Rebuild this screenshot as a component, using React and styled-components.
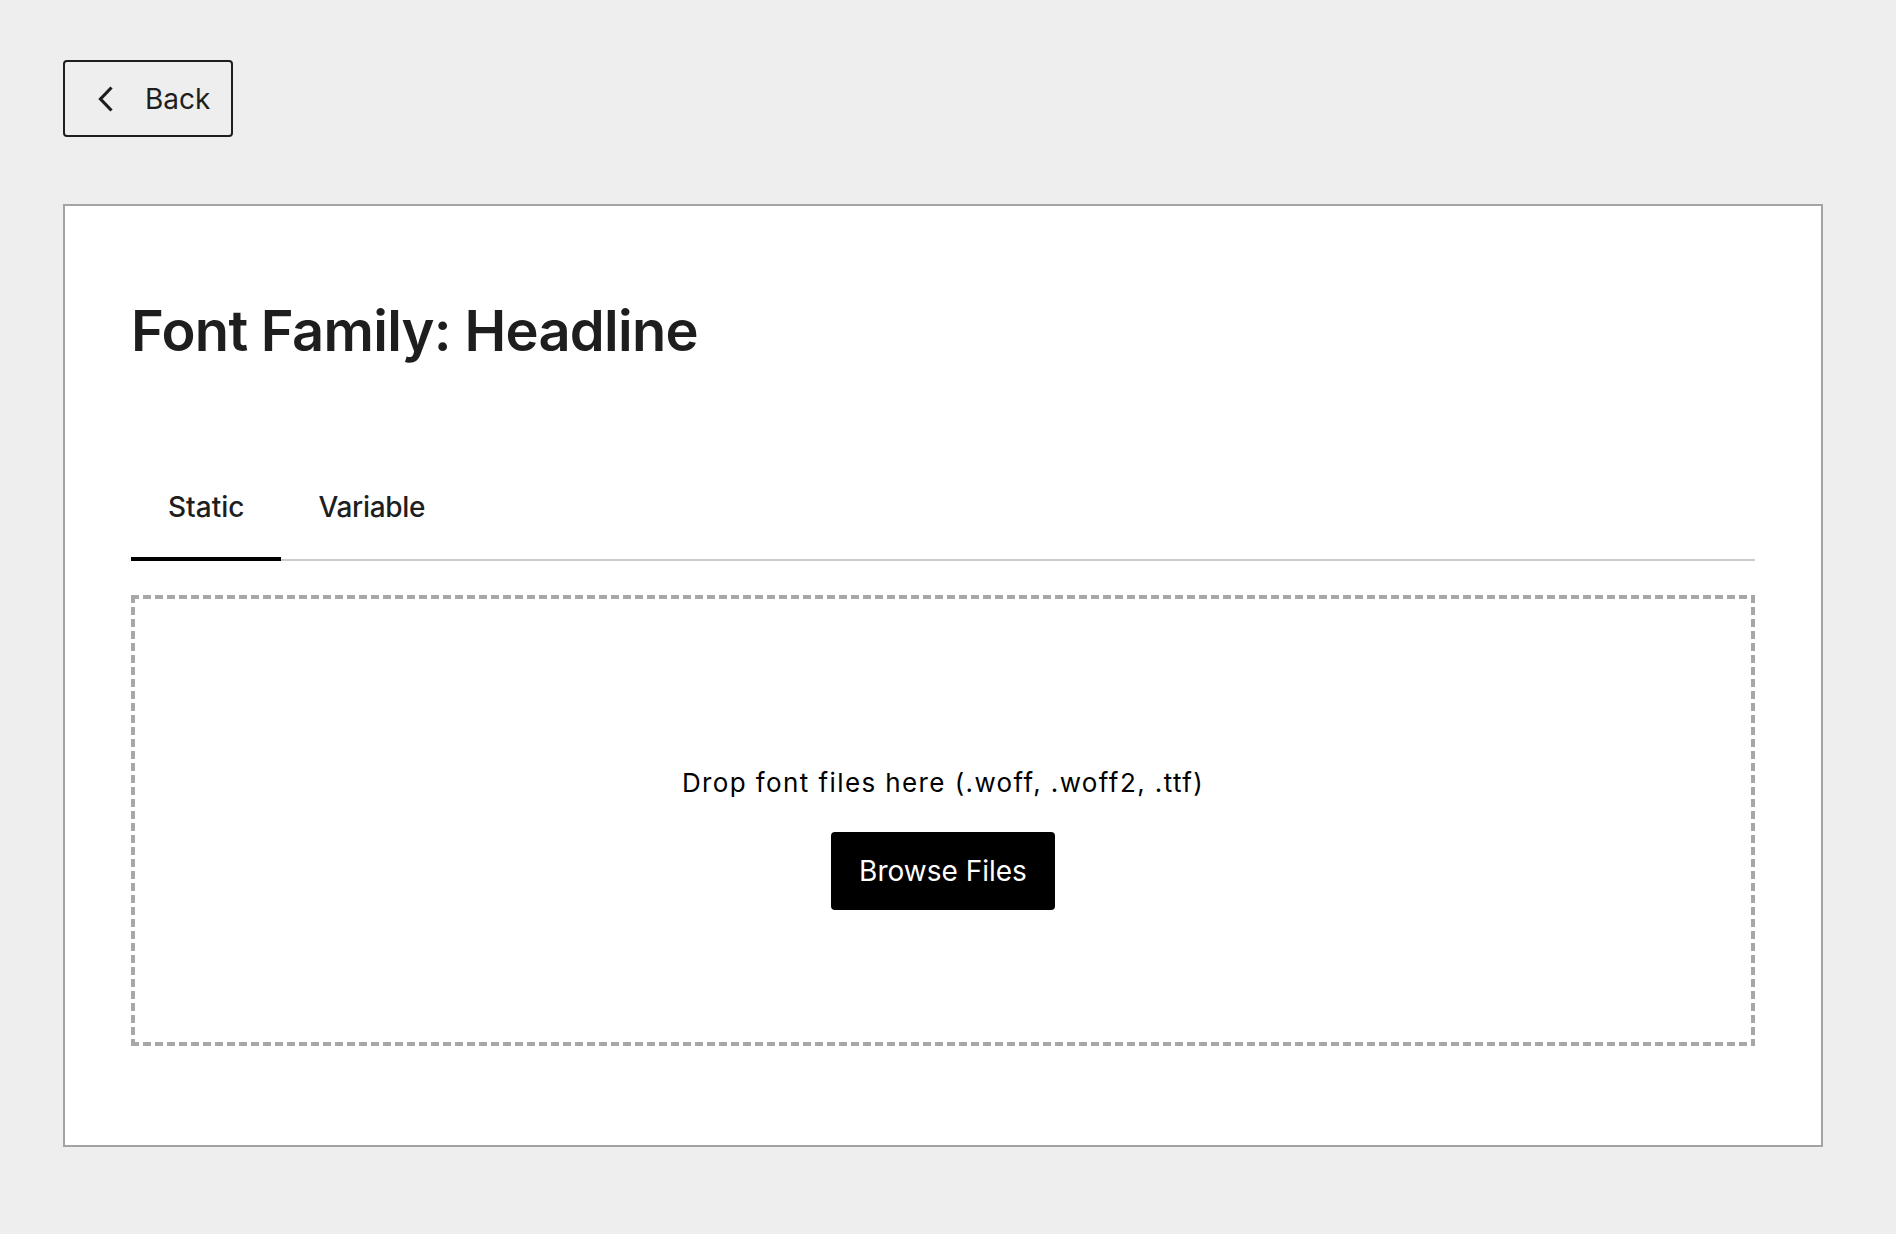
import React, { useState } from "react"
import styled, { createGlobalStyle } from "styled-components"

const GlobalStyle = createGlobalStyle`
  html, body {
    margin: 0;
    padding: 0;
    background: #eeeeee;
  }
  body {
    font-family: Inter, "Noto Sans", sans-serif;
    color: #1e1e1e;
  }
  * {
    box-sizing: border-box;
  }
`

const Page = styled.div`
  padding: 60px 73px 87px 63px;
  display: flex;
  flex-direction: column;
  align-items: flex-start;
  gap: 67px;
`

const BackButton = styled.button`
  display: flex;
  align-items: center;
  gap: 31px;
  width: 170px;
  height: 77px;
  padding: 0 0 0 33px;
  background: transparent;
  border: 2px solid #1e1e1e;
  border-radius: 4px;
  font-family: inherit;
  font-size: 28px;
  font-weight: 400;
  color: #1e1e1e;
  cursor: pointer;
`

const Card = styled.section`
  width: 1760px;
  background: #ffffff;
  border: 2px solid #a3a3a3;
  padding: 92px 66px 99px;
`

const Title = styled.h1`
  margin: 0;
  font-size: 56px;
  line-height: 67px;
  font-weight: 600;
  letter-spacing: -0.7px;
  color: #1e1e1e;
`

const TabList = styled.div`
  display: flex;
  margin-top: 90px;
  border-bottom: 2px solid #cccccc;
`

const Tab = styled.button`
  position: relative;
  height: 104px;
  padding: 0 37px;
  background: none;
  border: none;
  font-family: inherit;
  font-size: 28px;
  font-weight: 500;
  letter-spacing: ${props => (props.$tight ? "-0.3px" : "0")};
  color: #1e1e1e;
  cursor: pointer;

  &::after {
    content: "";
    position: absolute;
    left: 0;
    right: 0;
    bottom: -2px;
    height: 4px;
    background: ${props => (props.$active ? "#000000" : "transparent")};
  }
`

/* dashes drawn as 8px on / 4px off, like the original */
const dash = "#a7a7a7"
const DropZone = styled.div`
  margin-top: 34px;
  height: 451px;
  padding-top: 170px;
  display: flex;
  flex-direction: column;
  align-items: center;
  gap: 31px;
  background:
    linear-gradient(to right, ${dash} 8px, transparent 8px) left top / 12px 4px repeat-x,
    linear-gradient(to right, ${dash} 8px, transparent 8px) left bottom / 12px 4px repeat-x,
    linear-gradient(to bottom, ${dash} 8px, transparent 8px) left top / 4px 12px repeat-y,
    linear-gradient(to bottom, ${dash} 8px, transparent 8px) right top / 4px 12px repeat-y;
`

const DropText = styled.p`
  margin: 0;
  font-size: 26px;
  line-height: 36px;
  letter-spacing: 1.4px;
  color: #000000;
`

const BrowseButton = styled.button`
  height: 78px;
  padding: 0 28px;
  background: #000000;
  color: #ffffff;
  border: none;
  border-radius: 4px;
  font-family: inherit;
  font-size: 28px;
  font-weight: 400;
  cursor: pointer;
`

const Chevron = () => (
  <svg width="16" height="26" viewBox="0 0 16 26" fill="none">
    <polyline points="13.5,1.5 2.5,13 13.5,24.5" stroke="#1e1e1e" strokeWidth="3.2" />
  </svg>
)

export default function App() {
  const [tab, setTab] = useState("static")
  return (
    <>
      <GlobalStyle />
      <Page>
        <BackButton>
          <Chevron />
          Back
        </BackButton>
        <Card>
          <Title>Font Family: Headline</Title>
          <TabList>
            <Tab $active={tab === "static"} onClick={() => setTab("static")}>Static</Tab>
            <Tab $tight $active={tab === "variable"} onClick={() => setTab("variable")}>Variable</Tab>
          </TabList>
          <DropZone>
            <DropText>Drop font files here (.woff, .woff2, .ttf)</DropText>
            <BrowseButton>Browse Files</BrowseButton>
          </DropZone>
        </Card>
      </Page>
    </>
  )
}
